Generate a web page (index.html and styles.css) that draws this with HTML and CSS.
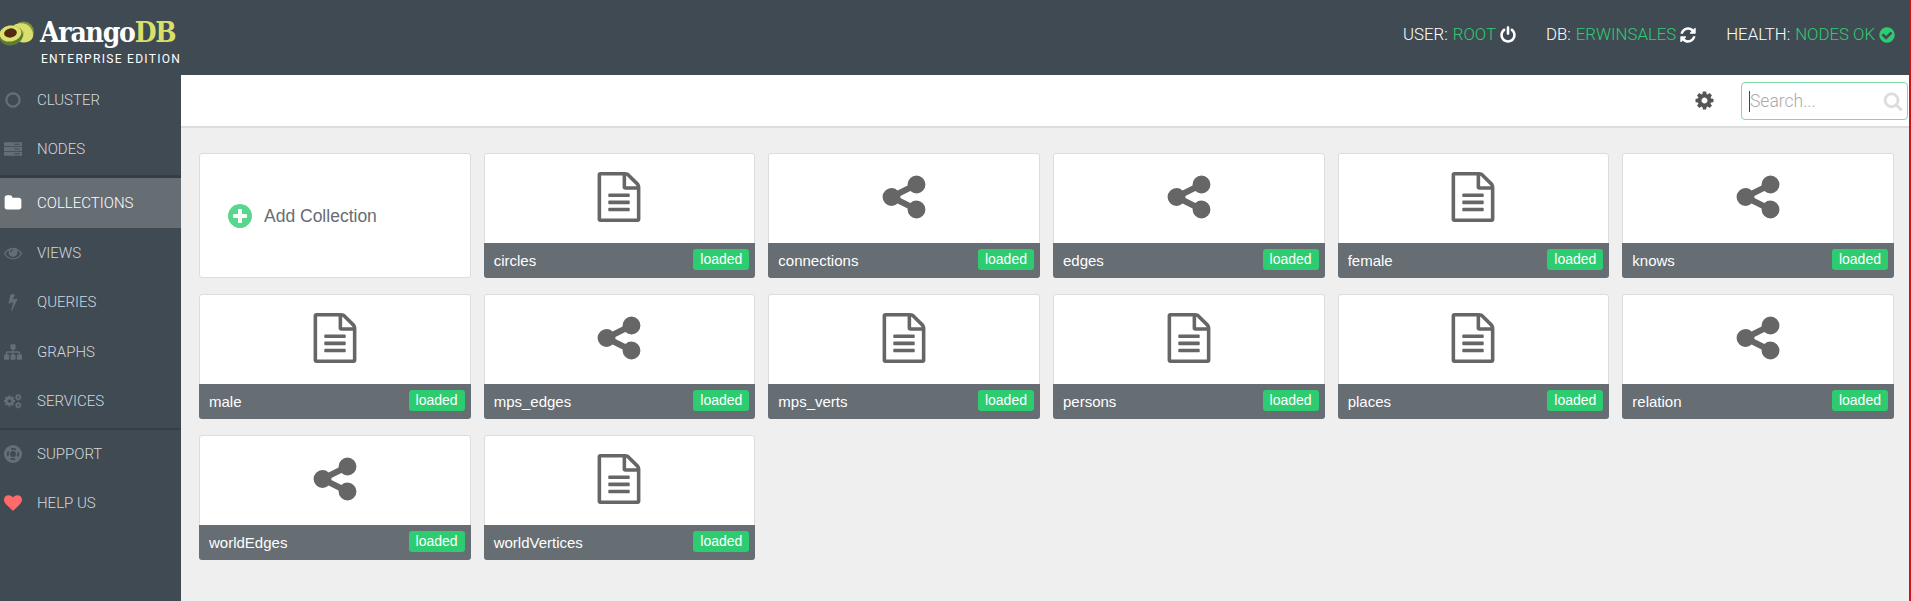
FILE: index.html
```html
<!DOCTYPE html>
<html lang="en">
<head>
    <meta charset="UTF-8">
    <meta name="viewport" content="width=device-width, initial-scale=1.0">
    <title>ArangoDB Web Interface</title>
    <link rel="stylesheet" href="styles.css">
</head>
<body>
    <svg class="icon-defs" xmlns="http://www.w3.org/2000/svg">
        <symbol id="i-doc" viewBox="0 0 1792 1792"><path d="M1596 380q28 28 48 76t20 88v1152q0 40-28 68t-68 28h-1344q-40 0-68-28t-28-68v-1600q0-40 28-68t68-28h896q40 0 88 20t76 48zm-444-244v376h376q-10-29-22-41l-313-313q-12-12-41-22zm384 1528v-1024h-416q-40 0-68-28t-28-68v-416h-768v1536h1280zm-1024-864q0-14 9-23t23-9h704q14 0 23 9t9 23v64q0 14-9 23t-23 9h-704q-14 0-23-9t-9-23v-64zm736 224q14 0 23 9t9 23v64q0 14-9 23t-23 9h-704q-14 0-23-9t-9-23v-64q0-14 9-23t23-9h704zm0 256q14 0 23 9t9 23v64q0 14-9 23t-23 9h-704q-14 0-23-9t-9-23v-64q0-14 9-23t23-9h704z"/></symbol>
        <symbol id="i-share" viewBox="0 0 1792 1792"><path d="M1344 1024q133 0 226.5 93.5t93.5 226.5-93.5 226.5-226.5 93.5-226.5-93.5-93.5-226.5q0-12 2-34l-360-180q-92 86-218 86-133 0-226.5-93.5t-93.5-226.5 93.5-226.5 226.5-93.5q126 0 218 86l360-180q-2-22-2-34 0-133 93.5-226.5t226.5-93.5 226.5 93.5 93.5 226.5-93.5 226.5-226.5 93.5q-126 0-218-86l-360 180q2 22 2 34t-2 34l360 180q92-86 218-86z"/></symbol>
        <symbol id="i-cog" viewBox="0 0 1792 1792"><path d="M1152 896q0-106-75-181t-181-75-181 75-75 181 75 181 181 75 181-75 75-181zm512-109v222q0 12-8 23t-20 13l-185 28q-19 54-39 91 35 50 107 138 10 12 10 25t-9 23q-27 37-99 108t-94 71q-12 0-26-9l-138-108q-44 23-91 38-16 136-29 186-7 28-36 28h-222q-14 0-24.5-8.5t-11.5-21.5l-28-184q-49-16-90-37l-141 107q-10 9-25 9-14 0-25-11-126-114-165-168-7-10-7-23 0-12 8-23 15-21 51-66.5t54-70.5q-27-50-41-99l-183-27q-13-2-21-12.5t-8-23.5v-222q0-12 8-23t19-13l186-28q14-46 39-92-40-57-107-138-10-12-10-24 0-10 9-23 26-36 98.5-107.5t94.5-71.5q13 0 26 10l138 107q44-23 91-38 16-136 29-186 7-28 36-28h222q14 0 24.5 8.5t11.5 21.5l28 184q49 16 90 37l142-107q9-9 24-9 13 0 25 10 129 119 165 170 7 8 7 22 0 12-8 23-15 21-51 66.5t-54 70.5q26 50 41 98l183 28q13 2 21 12.5t8 23.5z"/></symbol>
        <symbol id="i-plus" viewBox="0 0 1792 1792"><path d="M1344 960v-128q0-26-19-45t-45-19h-256v-256q0-26-19-45t-45-19h-128q-26 0-45 19t-19 45v256h-256q-26 0-45 19t-19 45v128q0 26 19 45t45 19h256v256q0 26 19 45t45 19h128q26 0 45-19t19-45v-256h256q26 0 45-19t19-45zm320-64q0 209-103 385.5t-279.5 279.5-385.5 103-385.5-103-279.5-279.5-103-385.5 103-385.5 279.5-279.5 385.5-103 385.5 103 279.5 279.5 103 385.5z"/></symbol>
    </svg>

    <div class="page">
        <header class="topbar">
            <div class="brand">
                <svg class="brand-logo" viewBox="0 0 34 26" width="34" height="26">
                    <ellipse cx="23.5" cy="11" rx="10.5" ry="10.5" fill="#7d8f40"/>
                    <path d="M14 4c6-3 13-2 16 2 4 5 4 11 1 13-3 3-9 3-14 1z" fill="#d9de6c"/>
                    <path d="M15 8c5-1 9 1 9 5s-4 6-8 5z" fill="#b4c25a"/>
                    <ellipse cx="11" cy="14.5" rx="12" ry="10" transform="rotate(-10 11 14.5)" fill="#5f7a34"/>
                    <ellipse cx="10.5" cy="12.5" rx="11" ry="8" transform="rotate(-10 10.5 12.5)" fill="#dbe06e"/>
                    <ellipse cx="10.5" cy="12" rx="6.4" ry="4.6" transform="rotate(-8 10.5 12)" fill="#4f2a0f"/>
                </svg>
                <div class="brand-text">
                    <div class="brand-name">Arango<span class="brand-db">DB</span></div>
                    <div class="brand-edition">ENTERPRISE EDITION</div>
                </div>
            </div>
            <div class="status">
                <div class="status-item">
                    <span class="status-label">USER:</span>
                    <span class="status-value">ROOT</span>
                    <svg class="status-icon" viewBox="0 0 1792 1792"><path d="M1664 896q0 156-61 298t-164 245-245 164-298 61-298-61-245-164-164-245-61-298q0-182 80.5-343t226.5-270q43-32 95.5-25t83.5 50q32 42 24.5 94.5t-49.5 84.5q-98 74-151.5 181t-53.5 228q0 104 40.5 198.5t109.5 163.5 163.5 109.5 198.5 40.5 198.5-40.5 163.5-109.5 109.5-163.5 40.5-198.5q0-121-53.5-228t-151.5-181q-42-32-49.5-84.5t24.5-94.5q31-43 84-50t95 25q146 109 226.5 270t80.5 343zm-640-768v640q0 52-38 90t-90 38-90-38-38-90v-640q0-52 38-90t90-38 90 38 38 90z"/></svg>
                </div>
                <div class="status-item">
                    <span class="status-label">DB:</span>
                    <span class="status-value">ERWINSALES</span>
                    <svg class="status-icon" viewBox="0 0 1792 1792"><path d="M1639 1056q0 5-1 7-64 268-268 434.5t-478 166.5q-146 0-282.5-55t-243.5-157l-129 129q-19 19-45 19t-45-19-19-45v-448q0-26 19-45t45-19h448q26 0 45 19t19 45-19 45l-137 137q71 66 161 102t187 36q134 0 250-65t186-179q11-17 53-117 8-23 30-23h192q13 0 22.5 9.5t9.5 22.5zm25-800v448q0 26-19 45t-45 19h-448q-26 0-45-19t-19-45 19-45l138-138q-148-137-349-137-134 0-250 65t-186 179q-11 17-53 117-8 23-30 23h-199q-13 0-22.5-9.5t-9.5-22.5v-7q65-268 270-434.5t480-166.5q146 0 284 55.5t245 156.5l130-129q19-19 45-19t45 19 19 45z"/></svg>
                </div>
                <div class="status-item">
                    <span class="status-label">HEALTH:</span>
                    <span class="status-value">NODES OK</span>
                    <svg class="status-icon status-icon-ok" viewBox="0 0 1792 1792"><path d="M1412 734q0-28-18-46l-91-90q-19-19-45-19t-45 19l-408 407-226-226q-19-19-45-19t-45 19l-91 90q-18 18-18 46 0 27 18 45l362 362q19 19 45 19 27 0 46-19l543-543q18-18 18-45zm252 162q0 209-103 385.5t-279.5 279.5-385.5 103-385.5-103-279.5-279.5-103-385.5 103-385.5 279.5-279.5 385.5-103 385.5 103 279.5 279.5 103 385.5z"/></svg>
                </div>
            </div>
        </header>

        <div class="body-row">
            <nav class="sidebar">
                <a class="nav-item nav-item-first">
                    <svg class="nav-icon" viewBox="0 0 1792 1792"><path d="M896 352q-148 0-273 73t-198 198-73 273 73 273 198 198 273 73 273-73 198-198 73-273-73-273-198-198-273-73zm768 544q0 209-103 385.5t-279.5 279.5-385.5 103-385.5-103-279.5-279.5-103-385.5 103-385.5 279.5-279.5 385.5-103 385.5 103 279.5 279.5 103 385.5z"/></svg>
                    CLUSTER
                </a>
                <a class="nav-item">
                    <svg class="nav-icon" viewBox="0 0 16 16"><path d="M0 2h16v3.6H0zM0 6.3h16v3.4H0zM0 10.4h16V14H0z"/><path class="nav-icon-cut" d="M9 3.4h5v.8H9zM9 7.6h5v.8H9zM9 11.8h5v.8H9z"/></svg>
                    NODES
                </a>
                <a class="nav-item nav-item-active">
                    <svg class="nav-icon" viewBox="0 0 1792 1792"><path d="M1728 608v704q0 92-66 158t-158 66h-1216q-92 0-158-66t-66-158v-960q0-92 66-158t158-66h320q92 0 158 66t66 158v32h672q92 0 158 66t66 158z"/></svg>
                    COLLECTIONS
                </a>
                <a class="nav-item">
                    <svg class="nav-icon" viewBox="0 0 1792 1792"><path d="M1664 960q-152-236-381-353 61 104 61 225 0 185-131.5 316.5t-316.5 131.5-316.5-131.5-131.5-316.5q0-121 61-225-229 117-381 353 133 205 333.5 326.5t434.5 121.5 434.5-121.5 333.5-326.5zm-720-384q0-20-14-34t-34-14q-125 0-214.5 89.5t-89.5 214.5q0 20 14 34t34 14 34-14 14-34q0-86 61-147t147-61q20 0 34-14t14-34zm848 384q0 34-20 69-140 230-376.5 368.5t-499.5 138.5-499.5-139-376.5-368q-20-35-20-69t20-69q140-229 376.5-368t499.5-139 499.5 139 376.5 368q20 35 20 69z"/></svg>
                    VIEWS
                </a>
                <a class="nav-item">
                    <svg class="nav-icon" viewBox="0 0 1792 1792"><path d="M1333 566q18 20 7 44l-540 1157q-13 25-42 25-4 0-14-2-17-5-25.5-19t-4.5-30l197-808-406 101q-4 1-12 1-18 0-31-11-18-15-13-39l201-825q4-14 16-23t28-9h328q19 0 32 12.5t13 29.5q0 8-5 18l-171 463 396-98q8-2 12-2 19 0 34 15z"/></svg>
                    QUERIES
                </a>
                <a class="nav-item">
                    <svg class="nav-icon" viewBox="0 0 1792 1792"><path d="M1792 1248v320q0 40-28 68t-68 28h-320q-40 0-68-28t-28-68v-320q0-40 28-68t68-28h96v-192h-512v192h96q40 0 68 28t28 68v320q0 40-28 68t-68 28h-320q-40 0-68-28t-28-68v-320q0-40 28-68t68-28h96v-192h-512v192h96q40 0 68 28t28 68v320q0 40-28 68t-68 28h-320q-40 0-68-28t-28-68v-320q0-40 28-68t68-28h96v-192q0-52 38-90t90-38h512v-192h-96q-40 0-68-28t-28-68v-320q0-40 28-68t68-28h320q40 0 68 28t28 68v320q0 40-28 68t-68 28h-96v192h512q52 0 90 38t38 90v192h96q40 0 68 28t28 68z"/></svg>
                    GRAPHS
                </a>
                <a class="nav-item">
                    <svg class="nav-icon" viewBox="0 0 18 18">
                        <use href="#i-cog" x="-1" y="2.5" width="13" height="13"/>
                        <use href="#i-cog" x="10.5" y="1.5" width="7.5" height="7.5"/>
                        <use href="#i-cog" x="10.5" y="9.5" width="7.5" height="7.5"/>
                    </svg>
                    SERVICES
                </a>
                <div class="nav-sep"></div>
                <a class="nav-item">
                    <svg class="nav-icon" viewBox="0 0 16 16">
                        <circle cx="8" cy="8" r="8"/>
                        <circle class="nav-icon-ring" cx="8" cy="8" r="4.6" stroke-width="1.6" stroke-dasharray="4.2 3" stroke-dashoffset="2.1"/>
                        <circle class="nav-icon-hole" cx="8" cy="8" r="2.6"/>
                    </svg>
                    SUPPORT
                </a>
                <a class="nav-item nav-item-heart">
                    <svg class="nav-icon" viewBox="0 0 1792 1792"><path d="M896 1664q-26 0-44-18l-624-602q-10-8-27.5-26t-55.5-65.5-68-97.5-53.5-121-23.5-138q0-220 127-344t351-124q62 0 126.5 21.5t120 58 95.5 68.5 76 68q36-36 76-68t95.5-68.5 120-58 126.5-21.5q224 0 351 124t127 344q0 221-229 450l-623 600q-18 18-44 18z"/></svg>
                    HELP US
                </a>
            </nav>

            <main class="main">
                <div class="subbar">
                    <svg class="subbar-gear"><use href="#i-cog"/></svg>
                    <div class="search">
                        <input class="search-input" type="text" placeholder="Search...">
                        <span class="search-caret"></span>
                        <svg class="search-icon" viewBox="0 0 1792 1792"><path d="M1216 832q0-185-131.5-316.5t-316.5-131.5-316.5 131.5-131.5 316.5 131.5 316.5 316.5 131.5 316.5-131.5 131.5-316.5zm512 832q0 52-38 90t-90 38q-54 0-90-38l-343-342q-179 124-399 124-143 0-273.5-55.5t-225-150-150-225-55.5-273.5 55.5-273.5 150-225 225-150 273.5-55.5 273.5 55.5 225 150 150 225 55.5 273.5q0 220-124 399l343 343q37 37 37 90z"/></svg>
                    </div>
                </div>

                <div class="grid">
                    <div class="card card-add">
                        <svg class="add-icon"><use href="#i-plus"/></svg>
                        <span class="add-label">Add Collection</span>
                    </div>

                    <div class="card">
                        <div class="card-body"><svg class="card-icon"><use href="#i-doc"/></svg></div>
                        <div class="card-foot"><span class="card-name">circles</span><span class="badge">loaded</span></div>
                    </div>
                    <div class="card">
                        <div class="card-body"><svg class="card-icon"><use href="#i-share"/></svg></div>
                        <div class="card-foot"><span class="card-name">connections</span><span class="badge">loaded</span></div>
                    </div>
                    <div class="card">
                        <div class="card-body"><svg class="card-icon"><use href="#i-share"/></svg></div>
                        <div class="card-foot"><span class="card-name">edges</span><span class="badge">loaded</span></div>
                    </div>
                    <div class="card">
                        <div class="card-body"><svg class="card-icon"><use href="#i-doc"/></svg></div>
                        <div class="card-foot"><span class="card-name">female</span><span class="badge">loaded</span></div>
                    </div>
                    <div class="card">
                        <div class="card-body"><svg class="card-icon"><use href="#i-share"/></svg></div>
                        <div class="card-foot"><span class="card-name">knows</span><span class="badge">loaded</span></div>
                    </div>

                    <div class="card">
                        <div class="card-body"><svg class="card-icon"><use href="#i-doc"/></svg></div>
                        <div class="card-foot"><span class="card-name">male</span><span class="badge">loaded</span></div>
                    </div>
                    <div class="card">
                        <div class="card-body"><svg class="card-icon"><use href="#i-share"/></svg></div>
                        <div class="card-foot"><span class="card-name">mps_edges</span><span class="badge">loaded</span></div>
                    </div>
                    <div class="card">
                        <div class="card-body"><svg class="card-icon"><use href="#i-doc"/></svg></div>
                        <div class="card-foot"><span class="card-name">mps_verts</span><span class="badge">loaded</span></div>
                    </div>
                    <div class="card">
                        <div class="card-body"><svg class="card-icon"><use href="#i-doc"/></svg></div>
                        <div class="card-foot"><span class="card-name">persons</span><span class="badge">loaded</span></div>
                    </div>
                    <div class="card">
                        <div class="card-body"><svg class="card-icon"><use href="#i-doc"/></svg></div>
                        <div class="card-foot"><span class="card-name">places</span><span class="badge">loaded</span></div>
                    </div>
                    <div class="card">
                        <div class="card-body"><svg class="card-icon"><use href="#i-share"/></svg></div>
                        <div class="card-foot"><span class="card-name">relation</span><span class="badge">loaded</span></div>
                    </div>

                    <div class="card">
                        <div class="card-body"><svg class="card-icon"><use href="#i-share"/></svg></div>
                        <div class="card-foot"><span class="card-name">worldEdges</span><span class="badge">loaded</span></div>
                    </div>
                    <div class="card">
                        <div class="card-body"><svg class="card-icon"><use href="#i-doc"/></svg></div>
                        <div class="card-foot"><span class="card-name">worldVertices</span><span class="badge">loaded</span></div>
                    </div>
                </div>
            </main>
        </div>
    </div>
</body>
</html>
```

FILE: styles.css
```css
html, body {
    margin: 0;
    height: 100%;
    overflow: hidden;
}
body {
    font-family: "Liberation Sans", Arial, sans-serif;
    background: #efefef;
}
.icon-defs {
    display: none;
}
.page {
    display: flex;
    flex-direction: column;
    height: 601px;
    border-right: 2px solid #d2101c;
    box-sizing: border-box;
}

/* top bar */
.topbar {
    display: flex;
    justify-content: space-between;
    height: 75px;
    flex: none;
    background: #404a53;
    color: #fff;
    font-family: Roboto, sans-serif;
}
.brand {
    display: flex;
    padding-top: 21px;
}
.brand-logo {
    flex: none;
    margin-right: 6px;
}
.brand-text {
    margin-top: -4px;
}
.brand-name {
    font-family: "DejaVu Serif", serif;
    font-stretch: condensed;
    font-weight: bold;
    font-size: 28px;
    line-height: 32px;
    letter-spacing: -1.2px;
}
.brand-db {
    color: #d9df6a;
}
.brand-edition {
    font-size: 12px;
    line-height: 14px;
    letter-spacing: 1.3px;
    margin-top: 3px;
    margin-left: 1px;
    white-space: nowrap;
}
.status {
    display: flex;
    gap: 29px;
    padding: 25px 13px 0 0;
    font-weight: 300;
    font-size: 16.8px;
    line-height: 19px;
}
.status-item {
    display: flex;
    align-items: center;
    height: 19px;
}
.status-label {
    margin-right: 5px;
}
.status-value {
    color: #2ecc71;
    margin-right: 3px;
}
.status-icon {
    width: 18px;
    height: 18px;
    fill: #fff;
}
.status-icon-ok {
    fill: #2ecc71;
}

/* sidebar + main */
.body-row {
    display: flex;
    flex: 1;
    min-height: 0;
}
.sidebar {
    width: 181px;
    flex: none;
    background: #404a53;
    font-family: Roboto, sans-serif;
    font-weight: 300;
    font-size: 15px;
}
.nav-item {
    display: flex;
    align-items: center;
    height: 49.5px;
    padding-left: 4px;
    color: #d3d8dc;
}
.nav-item-first {
    height: 49px;
}
.nav-icon {
    width: 18px;
    height: 18px;
    margin-right: 15px;
    fill: #656e76;
}
.nav-icon-cut {
    fill: #404a53;
}
.nav-icon-ring {
    fill: none;
    stroke: #404a53;
}
.nav-icon-hole {
    fill: #404a53;
}
.nav-item-active {
    box-sizing: border-box;
    height: 53px;
    margin-top: 1.5px;
    border-top: 3px solid #353e46;
    background: #666d73;
    color: #fff;
}
.nav-item-active .nav-icon {
    fill: #fff;
}
.nav-item-heart .nav-icon {
    fill: #ff6b6b;
}
.nav-sep {
    height: 2px;
    margin: 2px 0 -1px;
    background: #353e46;
}

.main {
    flex: 1;
    min-width: 0;
}
.subbar {
    display: flex;
    align-items: center;
    justify-content: flex-end;
    height: 51px;
    padding-right: 1px;
    background: #fff;
    border-bottom: 2px solid #ddd;
}
.subbar-gear {
    width: 21px;
    height: 21px;
    margin-right: 26px;
    fill: #555;
}
.search {
    position: relative;
    width: 167px;
    height: 38px;
}
.search-input {
    box-sizing: border-box;
    width: 100%;
    height: 100%;
    padding: 0 30px 0 8px;
    border: 1px solid #7fdca4;
    border-radius: 4px;
    outline: none;
    font-family: Roboto, sans-serif;
    font-weight: 300;
    font-size: 17.5px;
    color: #555;
    background: #fff;
}
.search-input::placeholder {
    color: #aaa;
}
.search-caret {
    position: absolute;
    left: 8px;
    top: 9px;
    width: 1px;
    height: 21px;
    background: #444;
}
.search-icon {
    position: absolute;
    right: 5px;
    top: 9px;
    width: 20px;
    height: 20px;
    fill: #ddd;
}

/* collection cards */
.grid {
    display: grid;
    grid-template-columns: repeat(6, 1fr);
    column-gap: 13px;
    row-gap: 16px;
    padding: 25px 15px 0 18px;
}
.card {
    display: flex;
    flex-direction: column;
    box-sizing: border-box;
    height: 125px;
    background: #fff;
    border: 1px solid #ddd;
    border-radius: 3px;
}
.card-add {
    flex-direction: row;
    align-items: center;
    padding-left: 26px;
}
.add-icon {
    width: 28px;
    height: 28px;
    margin: 1px 10px 0 0;
    fill: #58d68d;
}
.add-label {
    margin-top: 1px;
    font-size: 17.5px;
    color: #666d73;
}
.card-body {
    flex: 1;
    display: flex;
    justify-content: center;
    padding-top: 17.5px;
}
.card-icon {
    width: 50px;
    height: 50px;
    fill: #666;
}
.card-foot {
    display: flex;
    justify-content: space-between;
    align-items: flex-start;
    height: 35px;
    flex: none;
    margin: 0 -1px -1px;
    padding: 6px 6px 0 10px;
    box-sizing: border-box;
    background: #666d73;
    border-radius: 0 0 3px 3px;
    color: #fff;
    font-size: 14px;
}
.card-name {
    font-size: 15px;
    line-height: 24px;
}
.badge {
    height: 21px;
    padding: 0 7px;
    line-height: 20px;
    background: #2ecc71;
    border-radius: 3px;
}
```
